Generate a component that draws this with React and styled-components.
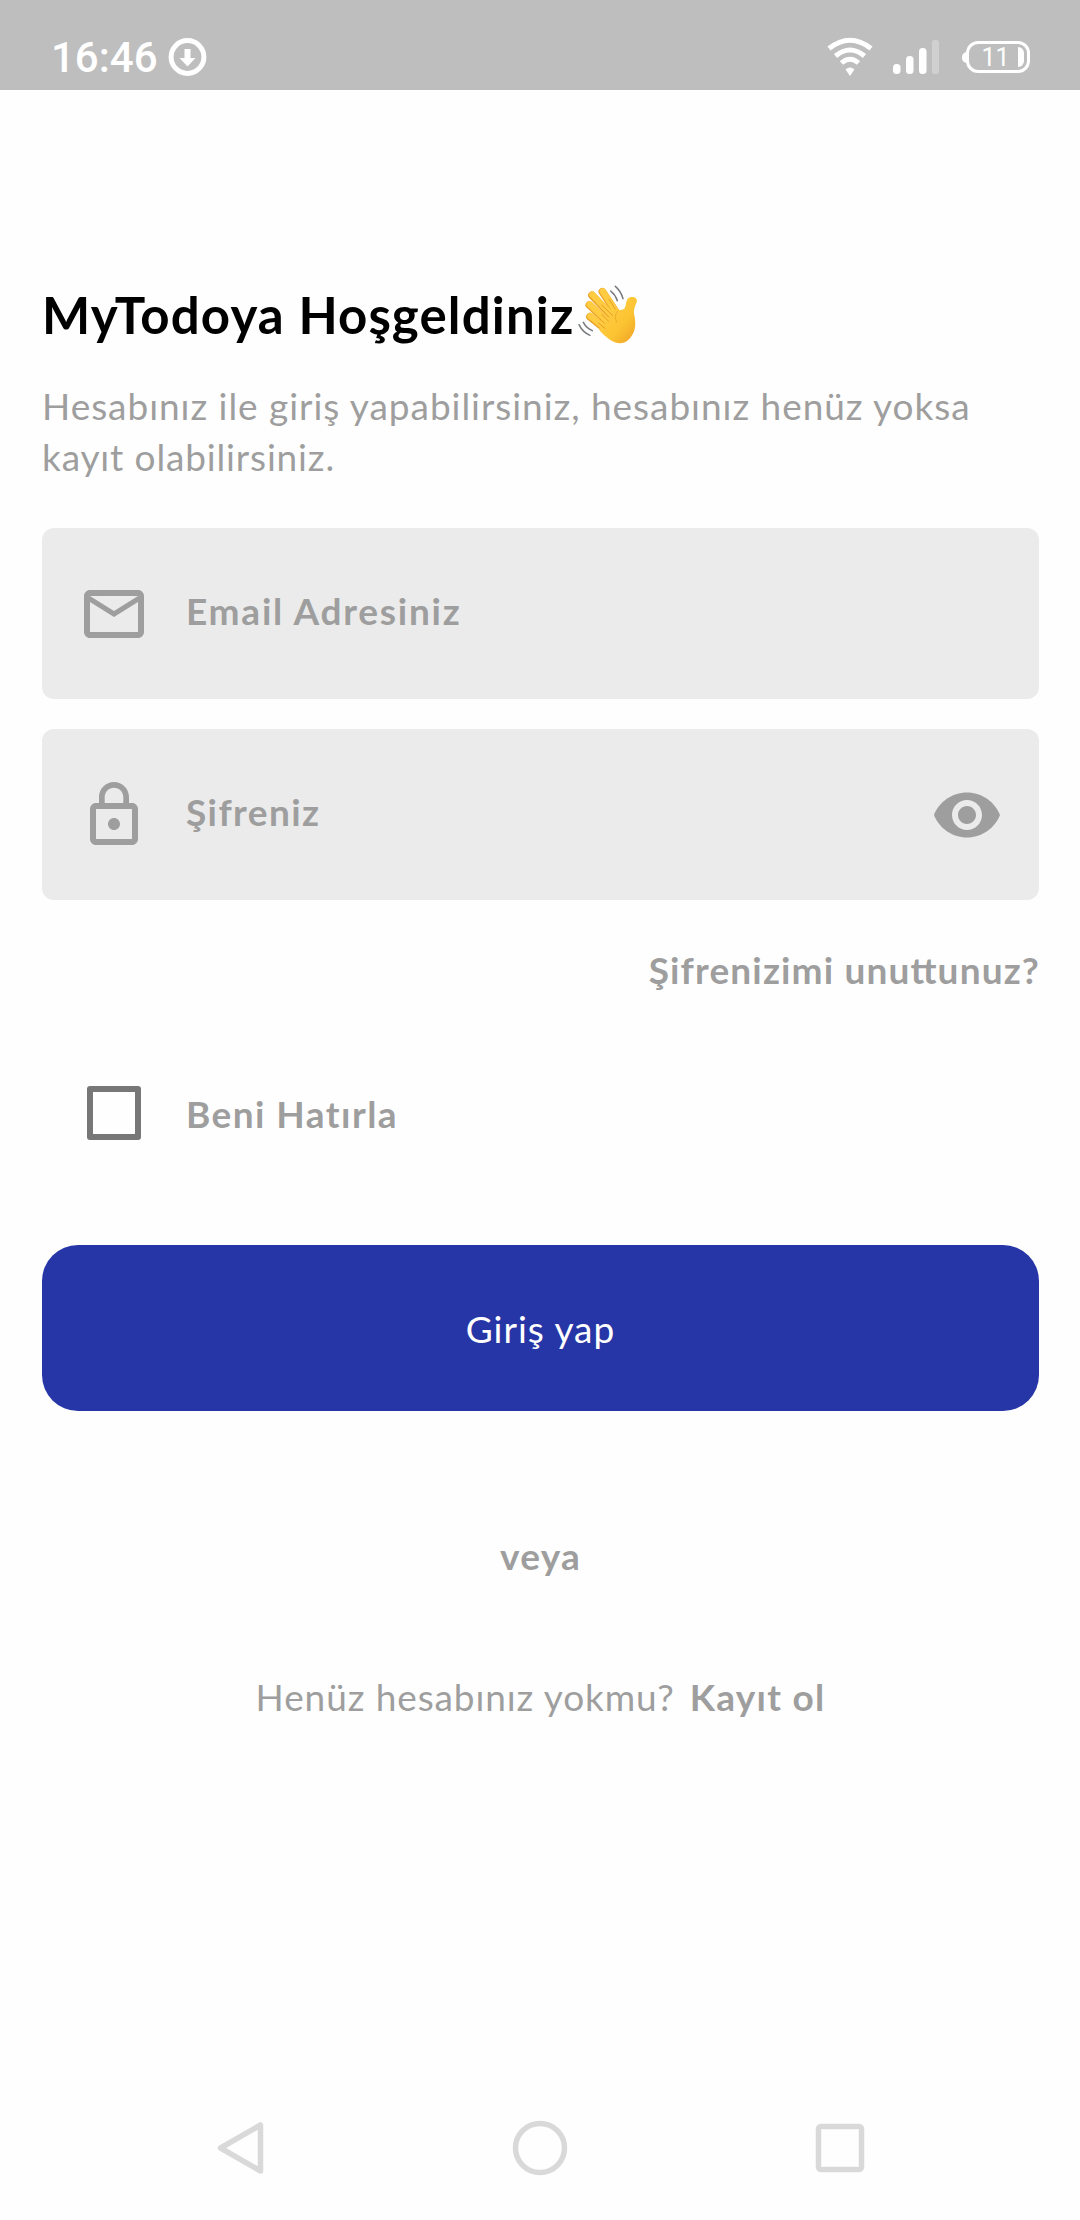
import React, { useState } from "react";
import styled, { createGlobalStyle } from "styled-components";

const GlobalStyle = createGlobalStyle`
  * { box-sizing: border-box; }
  body { margin: 0; background: #fefefe; }
  button { font: inherit; border: 0; padding: 0; background: none; }
`;

const Screen = styled.div`
  width: 1080px;
  height: 2220px;
  display: flex;
  flex-direction: column;
  background: #fefefe;
  font-family: Lato, "Noto Sans", sans-serif;
  font-size: 37px;
  line-height: 51px;
  color: #9e9e9e;
  overflow: hidden;
  white-space: nowrap;
`;

const StatusBar = styled.header`
  height: 90px;
  flex: none;
  display: flex;
  justify-content: space-between;
  padding: 32px 50px 0 51px;
  background: #bebebe;
  color: #fff;
`;

const StatusGroup = styled.div`
  display: flex;
  align-items: center;
  height: 50px;
  gap: ${(p) => p.$gap}px;
`;

const Clock = styled.span`
  padding-top: 2px;
  font: 500 42px/50px Roboto, sans-serif;
`;

const Main = styled.main`
  flex: 1;
  display: flex;
  flex-direction: column;
  padding: 191px 41px 0 42px;
`;

const Title = styled.h1`
  margin: 0;
  height: 68px;
  display: flex;
  align-items: center;
  font-size: 51px;
  line-height: 68px;
  font-weight: 700;
  letter-spacing: ${(p) => p.$track}px;
  color: #000;
`;

const Intro = styled.p`
  margin: 31px 0 46px;
`;

const Line = styled.span`
  display: block;
  letter-spacing: ${(p) => p.$track}px;
`;

const Fields = styled.div`
  display: flex;
  flex-direction: column;
  gap: 30px;
`;

const Field = styled.label`
  height: 171px;
  display: flex;
  align-items: center;
  padding: 0 36px;
  border-radius: 12px;
  background: #ebebeb;
`;

const FieldText = styled.span`
  flex: 1;
  margin: 0 0 7px 36px;
  font-weight: 700;
  letter-spacing: ${(p) => p.$track}px;
`;

const Forgot = styled.a`
  align-self: flex-end;
  margin-top: 44px;
  margin-right: -1px;
  font-weight: 700;
  font-feature-settings: "liga" 1;
  letter-spacing: ${(p) => p.$track}px;
`;

const Remember = styled.label`
  display: flex;
  align-items: center;
  height: 54px;
  margin: 91px 0 105px;
  padding-left: 45px;
`;

const CheckBox = styled.span`
  width: 54px;
  height: 54px;
  border: 6px solid #777;
  border-radius: 3px;
`;

const RememberText = styled.span`
  margin: 0 0 0 45px;
  font-weight: 700;
  letter-spacing: ${(p) => p.$track}px;
`;

const LoginButton = styled.button`
  height: 166px;
  border-radius: 36px;
  background: #2636a6;
  && {
    color: #fff;
    letter-spacing: ${(p) => p.$track}px;
  }
`;

const Or = styled.div`
  margin-top: 119px;
  text-align: center;
  font-weight: 700;
  letter-spacing: ${(p) => p.$track}px;
`;

const SignUp = styled.div`
  display: flex;
  justify-content: center;
  gap: 15px;
  margin-top: 90px;
`;

const SignUpText = styled.span`
  font-weight: ${(p) => (p.$bold ? 700 : 400)};
  letter-spacing: ${(p) => p.$track}px;
`;

const NavBar = styled.nav`
  height: 144px;
  flex: none;
  display: flex;
  justify-content: space-between;
  align-items: center;
  padding: 0 210px;
`;

const Icon = styled.svg`
  display: block;
  flex: none;
  width: ${(p) => p.$w || 72}px;
  height: ${(p) => p.$h || p.$w || 72}px;
  fill: ${(p) => p.$fill || "#9e9e9e"};
`;

const DownloadIcon = () => (
  <Icon $w={40} $fill="#fff" viewBox="0 0 40 40">
    <circle cx="19.500" cy="20" r="16.400" fill="none" stroke="#fff" strokeWidth="5" />
    <path d="M16.500 12h6v9h5l-8 8.500-8-8.500h5z" />
  </Icon>
);

const WifiIcon = () => (
  <Icon $w={46} $h={40} $fill="none" viewBox="0 0 46 40">
    <g stroke="#fff" strokeWidth="5">
      <path d="M2 11.500Q23-5 44 11.500" />
      <path d="M8.500 19Q23 7 37.500 19" />
      <path d="M14.500 26Q23 18.500 31.500 26" />
    </g>
    <path d="M18.500 32.500Q23 28.500 27.500 32.500L23 39z" fill="#fff" />
  </Icon>
);

const SignalIcon = () => (
  <Icon $w={48} $h={36} $fill="#fff" viewBox="0 0 48 36">
    <rect x="0" y="25" width="7.500" height="10" rx="3.500" />
    <rect x="13" y="17" width="7.500" height="18" rx="3.500" />
    <rect x="26" y="9" width="7.500" height="26" rx="3.500" />
    <rect x="39" y="1" width="7" height="34" rx="2.500" opacity=".28" />
  </Icon>
);

const Battery = styled.div`
  width: 64px;
  height: 32px;
  position: relative;
  display: flex;
  align-items: center;
  justify-content: center;
  margin-left: 5px;
  padding: 1px 5px 0 0;
  border: 3px solid #fff;
  border-radius: 12px;
  font: 400 25px/26px Roboto, sans-serif;
  &::before {
    content: "";
    position: absolute;
    left: -7px;
    top: 8px;
    width: 5px;
    height: 11px;
    border-radius: 5px 0 0 5px;
    background: #fff;
  }
  &::after {
    content: "";
    position: absolute;
    right: 3px;
    top: 3px;
    width: 6px;
    height: 20px;
    border-radius: 0 6px 6px 0;
    background: #fff;
  }
`;

const WavingHand = () => (
  <Icon $w={66} $h={64} $fill="none" viewBox="42 42 198 192" aria-label="waving hand">
    <defs>
      <linearGradient id="skin" x1="0" y1="0" x2="1" y2="1">
        <stop offset="0" stopColor="#ffd04a" />
        <stop offset=".6" stopColor="#fcc433" />
        <stop offset="1" stopColor="#eda023" />
      </linearGradient>
    </defs>
    <g strokeLinecap="round" fill="none">
      <g stroke="#e9a025" strokeWidth="23">
        <path d="M87 143L145 190" />
        <path d="M85 108L150 168" />
        <path d="M93 79L162 150" />
        <path d="M124 68L172 140" />
      </g>
      <g stroke="#ffcb40" strokeWidth="19">
        <path d="M88 141L145 188" />
        <path d="M86 106L150 166" />
        <path d="M94 77L162 148" />
        <path d="M125 67L172 138" />
      </g>
    </g>
    <path
      d="M160 117Q176 128 190 119C197 109 193 90 207 85C219 81 231 88 227 99C223 111 218 118 219 134C225 160 226 184 208 206C192 226 168 227 148 213C134 203 119 190 113 180L137 160Z"
      fill="url(#skin)"
    />
    <path d="M122 136L143 157M122 108L154 139M144 91L163 120M112 162L132 178" stroke="#e59a25" strokeWidth="3" strokeLinecap="round" />
    <path d="M167 160Q158 142 169 127" stroke="#efae2c" strokeWidth="3" strokeLinecap="round" />
    <g stroke="#75797c" strokeWidth="4.500" strokeLinecap="round">
      <path d="M149 66Q163 77 169 95M163 52Q180 66 186 89" />
      <path d="M54 167Q65 190 87 199M67 160Q76 177 94 185" />
    </g>
  </Icon>
);

const MailIcon = () => (
  <Icon viewBox="0 0 24 24">
    <path d="M22 6c0-1.100-.9-2-2-2H4c-1.100 0-2 .9-2 2v12c0 1.100.9 2 2 2h16c1.100 0 2-.9 2-2V6zm-2 0l-8 5-8-5h16zm0 12H4V8l8 5 8-5v10z" />
  </Icon>
);

const LockIcon = () => (
  <Icon viewBox="0 0 24 24">
    <path d="M12 17c1.100 0 2-.9 2-2s-.9-2-2-2-2 .9-2 2 .9 2 2 2zm6-9h-1V6c0-2.760-2.240-5-5-5S7 3.240 7 6v2H6c-1.100 0-2 .9-2 2v10c0 1.100.9 2 2 2h12c1.100 0 2-.9 2-2V10c0-1.100-.9-2-2-2zM8.900 6c0-1.710 1.390-3.100 3.100-3.100s3.100 1.390 3.100 3.100v2H8.900V6zM18 20H6V10h12v10z" />
  </Icon>
);

const EyeIcon = () => (
  <Icon viewBox="0 0 24 24">
    <path d="M12 4.500C7 4.500 2.730 7.610 1 12c1.730 4.390 6 7.500 11 7.500s9.270-3.110 11-7.500c-1.730-4.390-6-7.500-11-7.500zM12 17c-2.760 0-5-2.240-5-5s2.240-5 5-5 5 2.240 5 5-2.240 5-5 5zm0-8c-1.660 0-3 1.340-3 3s1.340 3 3 3 3-1.340 3-3-1.340-3-3-3z" />
  </Icon>
);

const NavIcon = ({ children }) => (
  <Icon $w={60} $fill="none" viewBox="0 0 60 60" stroke="#d9d9d9" strokeWidth="5.500" strokeLinejoin="round">
    {children}
  </Icon>
);

export default function App() {
  const [checked, setChecked] = useState(false);
  return (
    <Screen>
      <GlobalStyle />
      <StatusBar>
        <StatusGroup $gap={10}>
          <Clock>16:46</Clock>
          <DownloadIcon />
        </StatusGroup>
        <StatusGroup $gap={20}>
          <WifiIcon />
          <SignalIcon />
          <Battery>11</Battery>
        </StatusGroup>
      </StatusBar>
      <Main>
        <Title $track={1.15}>
          MyTodoya Hoşgeldiniz
          <WavingHand />
        </Title>
        <Intro>
          <Line $track={0.96}>Hesabınız ile giriş yapabilirsiniz, hesabınız henüz yoksa</Line>
          <Line $track={0.85}>kayıt olabilirsiniz.</Line>
        </Intro>
        <Fields>
          <Field>
            <MailIcon />
            <FieldText $track={1.75}>Email Adresiniz</FieldText>
          </Field>
          <Field>
            <LockIcon />
            <FieldText $track={1.4}>Şifreniz</FieldText>
            <EyeIcon />
          </Field>
        </Fields>
        <Forgot $track={1.15}>Şifrenizimi unuttunuz?</Forgot>
        <Remember onClick={() => setChecked(!checked)}>
          <CheckBox />
          <RememberText $track={1.45}>Beni Hatırla</RememberText>
        </Remember>
        <LoginButton $track={1}>Giriş yap</LoginButton>
        <Or $track={1.2}>veya</Or>
        <SignUp>
          <SignUpText $track={0.9}>Henüz hesabınız yokmu?</SignUpText>
          <SignUpText $bold $track={1.25}>Kayıt ol</SignUpText>
        </SignUp>
      </Main>
      <NavBar>
        <NavIcon>
          <path d="M50.500 7v46L10.500 30z" />
        </NavIcon>
        <NavIcon>
          <circle cx="30" cy="30" r="24.500" />
        </NavIcon>
        <NavIcon>
          <rect x="8.500" y="8.500" width="43" height="43" rx="2.500" />
        </NavIcon>
      </NavBar>
    </Screen>
  );
}
